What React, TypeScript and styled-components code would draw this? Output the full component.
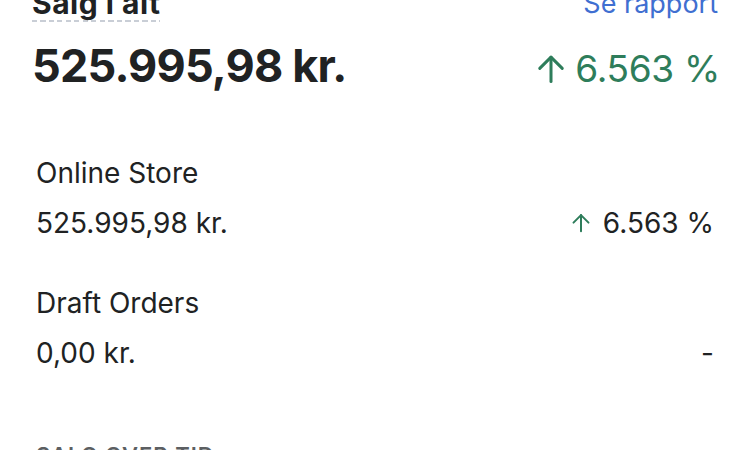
import React from "react";
import styled, { createGlobalStyle } from "styled-components";

const GlobalStyle = createGlobalStyle`
  html, body {
    margin: 0;
    padding: 0;
    background: #fff;
    overflow: hidden;
  }
  body {
    font-family: Inter, "Noto Sans", "Liberation Sans", sans-serif;
    color: #202223;
  }
`;

const Page = styled.div`
  width: 750px;
  height: 450px;
  overflow: hidden;
  box-sizing: border-box;
  padding: 0 32px;
`;

const Shift = styled.div`
  margin-top: -14px;
`;

const Header = styled.div`
  display: flex;
  justify-content: space-between;
  align-items: flex-start;
`;

const Title = styled.div`
  font-size: 30px;
  font-weight: 700;
  letter-spacing: 0.5px;
  line-height: 34px;
  padding-bottom: 4px;
  &::after {
    content: "";
    display: block;
    height: 2px;
    background-image: repeating-linear-gradient(
      to right,
      #c9ced6 0 5px,
      transparent 5px 8.5px
    );
  }
`;

const Link = styled.a`
  font-size: 27px;
  line-height: 34px;
  color: #3f6fd1;
  text-decoration: none;
  margin-top: 1px;
`;

const TotalRow = styled.div`
  display: flex;
  justify-content: space-between;
  align-items: baseline;
  margin-top: 12px;
`;

const Total = styled.div`
  font-size: 45px;
  font-weight: 700;
  letter-spacing: -0.8px;
  line-height: 56px;
`;

const Trend = styled.div<{ $big?: boolean }>`
  display: flex;
  align-items: baseline;
  gap: ${(p) => (p.$big ? "9px" : "12px")};
  font-size: ${(p) => (p.$big ? "37px" : "28px")};
  letter-spacing: ${(p) => (p.$big ? "-0.3px" : "0")};
  color: ${(p) => (p.$big ? "#2e7d5b" : "#202223")};
  margin-right: ${(p) => (p.$big ? "-2px" : "0")};
`;

const Arrow = styled.svg<{ $size: number }>`
  width: ${(p) => p.$size}px;
  height: ${(p) => p.$size}px;
  color: #2e7d5b;
  align-self: center;
  flex-shrink: 0;
`;

const Channels = styled.div`
  margin-top: 54px;
  padding: 0 4px;
  display: flex;
  flex-direction: column;
  gap: 30px;
`;

const Channel = styled.div`
  display: flex;
  flex-direction: column;
`;

const Label = styled.div`
  font-size: 28px;
  line-height: 50px;
`;

const ValueRow = styled.div`
  display: flex;
  justify-content: space-between;
  align-items: center;
  font-size: 28px;
  line-height: 50px;
`;

const Section = styled.div`
  margin-top: 62px;
  padding: 0 4px;
  font-size: 22px;
  font-weight: 600;
  letter-spacing: 1px;
  line-height: 30px;
  color: #5c5f62;
`;

const UpArrow = ({ size, stroke }: { size: number; stroke: number }) => (
  <Arrow $size={size} viewBox="0 0 24 24" fill="none" stroke="currentColor" strokeWidth={stroke} strokeLinecap="round" strokeLinejoin="round">
    <path d="M12 22V2.5" />
    <path d="M3 11.5 12 2.5l9 9" />
  </Arrow>
);

const channels = [
  { name: "Online Store", value: "525.995,98 kr.", change: "6.563 %" },
  { name: "Draft Orders", value: "0,00 kr.", change: null },
];

export default function App() {
  return (
    <Page>
      <GlobalStyle />
      <Shift>
        <Header>
          <Title>Salg i alt</Title>
          <Link href="#">Se rapport</Link>
        </Header>
        <TotalRow>
          <Total>525.995,98 kr.</Total>
          <Trend $big>
            <UpArrow size={30} stroke={2.4} />
            <span>6.563 %</span>
          </Trend>
        </TotalRow>
        <Channels>
          {channels.map((c) => (
            <Channel key={c.name}>
              <Label>{c.name}</Label>
              <ValueRow>
                <span>{c.value}</span>
                {c.change ? (
                  <Trend>
                    <UpArrow size={20} stroke={2.4} />
                    <span>{c.change}</span>
                  </Trend>
                ) : (
                  <span>-</span>
                )}
              </ValueRow>
            </Channel>
          ))}
        </Channels>
        <Section>SALG OVER TID</Section>
      </Shift>
    </Page>
  );
}
